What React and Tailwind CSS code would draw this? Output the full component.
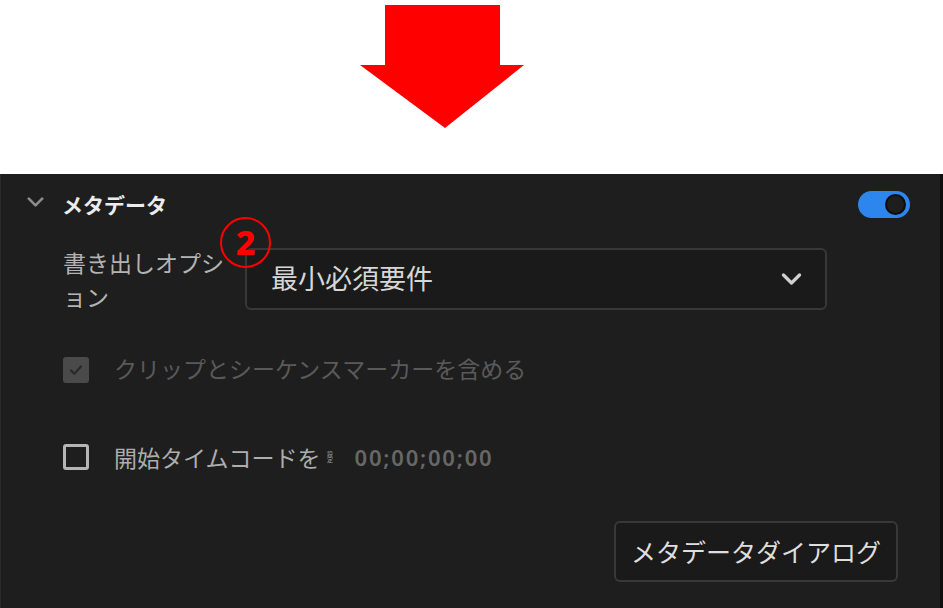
import React from 'react';

const jp = "font-['Noto_Sans_CJK_JP','Noto_Sans',sans-serif]";

function Chevron({ className }) {
  return (
    <svg viewBox="0 0 20 12" className={className} fill="none" stroke="currentColor" strokeWidth="3.2" strokeLinecap="round" strokeLinejoin="round">
      <path d="M2 2l8 8 8-8" />
    </svg>
  );
}

export default function App() {
  return (
    <div className={`w-[943px] h-[608px] bg-white flex flex-col overflow-hidden ${jp}`}>
      <div className="h-[174px] shrink-0">
        <svg width="164" height="123" viewBox="0 0 164 123" className="ml-[360px] mt-[5px]">
          <polygon points="25,0 140,0 140,60 164,60 85,123 0,60 25,60" fill="#ff0000" />
        </svg>
      </div>

      <div className="relative flex-1 bg-[#1e1e1e] border-l border-l-[#2a2a2a] border-r-[3px] border-r-[#0f0f0f] pl-[26px] pr-[30px] pt-4 flex flex-col">
        {/* header */}
        <div className="flex items-center h-[28px]">
          <Chevron className="w-[17px] h-[10px] text-[#8c8c8c] -mt-[4px]" />
          <span className="ml-[18px] text-[21px] font-bold text-[#ececec] leading-none">メタデータ</span>
          <div className="ml-auto w-[52px] h-[27px] rounded-full bg-[#2d86ed] flex items-center justify-end pr-[4px]">
            <div className="w-[21px] h-[21px] rounded-full bg-[#1e1e1e] border-2 border-[#0d0d0d]" />
          </div>
        </div>

        {/* export option */}
        <div className="flex items-start pl-[36px] mt-[27px]">
          <div className="w-[182px] text-[23px] leading-[34px] text-[#b3b3b3]">書き出しオプション</div>
          <div className="mt-[3px] w-[582px] h-[62px] rounded-[6px] border-2 border-[#383838] bg-[#1a1a1a] flex items-center pl-[24px] pr-[23px]">
            <span className="text-[27px] text-[#d6d6d6] leading-none -mt-[4px]">最小必須要件</span>
            <Chevron className="ml-auto w-[21px] h-[12px] text-[#d0d0d0]" />
          </div>
        </div>

        {/* include markers (disabled, checked) */}
        <div className="flex items-center pl-[36px] mt-[43px] h-[28px]">
          <div className="w-[26px] h-[26px] rounded-[3px] bg-[#4a4a4a] flex items-center justify-center">
            <svg viewBox="0 0 16 16" className="w-[16px] h-[16px]" fill="none" stroke="#2a2a2a" strokeWidth="2.4" strokeLinecap="round" strokeLinejoin="round">
              <path d="M3 8.5l3.3 3.2L13 4.5" />
            </svg>
          </div>
          <span className="ml-[25px] text-[23px] text-[#5a5a5a] leading-none -mt-[3px]">クリップとシーケンスマーカーを含める</span>
        </div>

        {/* start timecode */}
        <div className="flex items-center pl-[36px] mt-[59px] h-[28px]">
          <div className="w-[26px] h-[26px] rounded-[3px] border-[3px] border-[#b5b5b5]" />
          <span className="ml-[25px] text-[23px] text-[#adadad] leading-none">開始タイムコードを</span>
          <span className="ml-[5px] text-[6px] leading-[8px] text-[#9a9a9a] [writing-mode:vertical-rl]">設定</span>
          <span className="ml-[21px] font-['Noto_Sans',sans-serif] font-semibold text-[22px] tracking-[1.8px] text-[#676767] leading-none">00;00;00;00</span>
        </div>

        {/* dialog button */}
        <div className="flex justify-end mt-[50px] pr-[12px]">
          <button className="w-[284px] h-[61px] rounded-[6px] border-2 border-[#383838] bg-[#1a1a1a] text-[25px] text-[#dedede] leading-none">
            メタデータダイアログ
          </button>
        </div>

        {/* annotation ② */}
        <div className="absolute left-[219px] top-[43px] w-[51px] h-[51px] rounded-full border-[2.5px] border-[#ff0000] flex items-center justify-center">
          <span className="font-['Noto_Sans',sans-serif] font-extrabold text-[34px] text-[#ff0000] leading-none -mt-[2px]">2</span>
        </div>
      </div>
    </div>
  );
}
